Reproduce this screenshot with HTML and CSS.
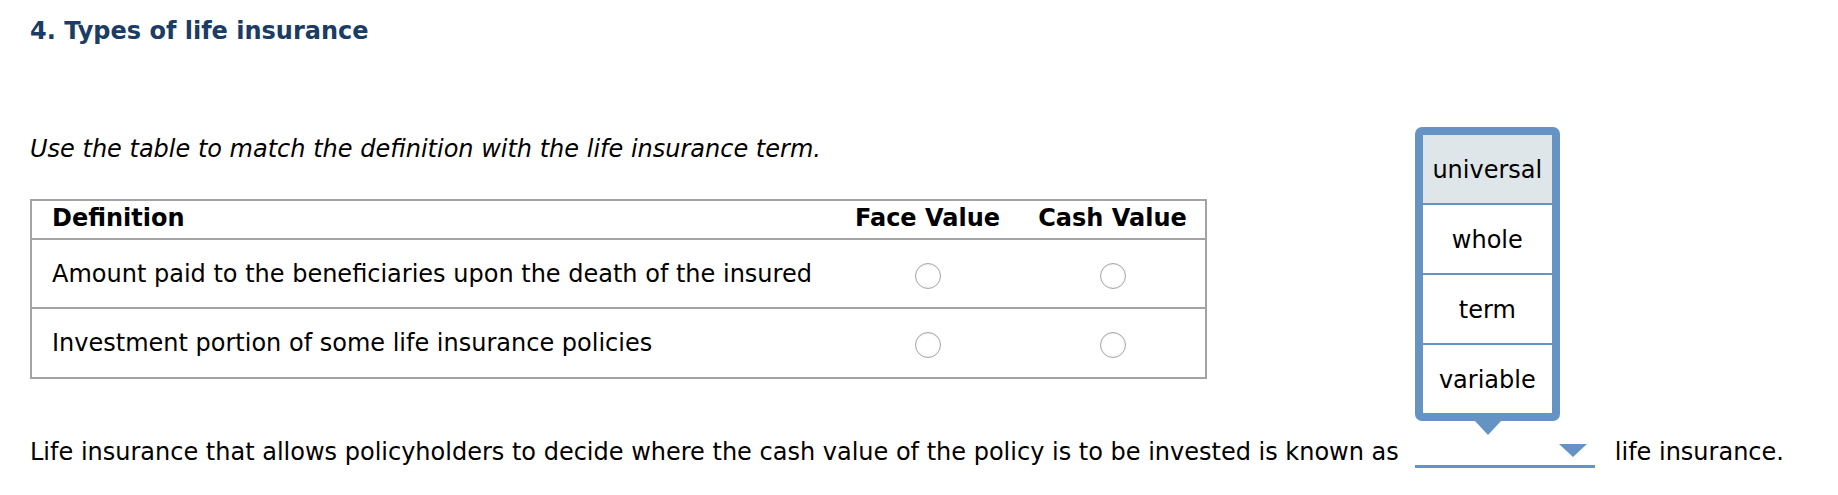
FILE: index.html
```html
<!DOCTYPE html>
<html lang="en">
<head>
<meta charset="utf-8">
<title>Types of life insurance</title>
<link rel="stylesheet" href="styles.css">
</head>
<body>
<h1 class="title">4. Types of life insurance</h1>
<p class="instructions">Use the table to match the definition with the life insurance term.</p>
<table class="match">
  <colgroup>
    <col class="col-def">
    <col class="col-face">
    <col class="col-cash">
  </colgroup>
  <thead>
    <tr>
      <th class="th-def">Definition</th>
      <th class="th-opt">Face Value</th>
      <th class="th-opt">Cash Value</th>
    </tr>
  </thead>
  <tbody>
    <tr>
      <td class="td-def">Amount paid to the beneficiaries upon the death of the insured</td>
      <td class="td-opt"><span class="radio"></span></td>
      <td class="td-opt"><span class="radio"></span></td>
    </tr>
    <tr>
      <td class="td-def">Investment portion of some life insurance policies</td>
      <td class="td-opt"><span class="radio"></span></td>
      <td class="td-opt"><span class="radio"></span></td>
    </tr>
  </tbody>
</table>
<div class="sentence">
  <span class="text">Life insurance that allows policyholders to decide where the cash value of the policy is to be invested is known as</span>
  <span class="select">
    <span class="popup">
      <span class="option active">universal</span>
      <span class="option">whole</span>
      <span class="option">term</span>
      <span class="option">variable</span>
    </span>
    <span class="pointer"></span>
    <span class="arrow"></span>
  </span>
  <span class="text">life insurance.</span>
</div>
</body>
</html>
```

FILE: styles.css
```css
html, body {
  margin: 0;
  padding: 0;
  background: #ffffff;
}

body {
  padding: 0 30px;
  font-family: "DejaVu Sans", Verdana, sans-serif;
  font-size: 24px;
  color: #000000;
}

.title {
  margin: 0;
  padding-top: 17px;
  font-size: 24px;
  line-height: 28px;
  font-weight: bold;
  color: #1b3c64;
}

.instructions {
  margin: 90px 0 0 0;
  font-style: italic;
  line-height: 28px;
}

.match {
  margin-top: 36px;
  width: 1177px;
  border-collapse: collapse;
  border: 2px solid #a3a3a3;
  table-layout: fixed;
}

.col-face { width: 185px; }
.col-cash { width: 186px; }

.match th,
.match td {
  padding: 0;
  border-bottom: 2px solid #a3a3a3;
  vertical-align: middle;
  line-height: 28px;
}

.match th {
  height: 34px;
  padding-bottom: 3px;
  font-weight: bold;
}

.match .th-def,
.match .td-def {
  text-align: left;
  padding-left: 20px;
}

.match .th-opt,
.match .td-opt {
  text-align: center;
}

.match tbody tr:first-child td { height: 67px; }
.match tbody tr:last-child td { height: 68px; }

.radio {
  display: inline-block;
  width: 26px;
  height: 26px;
  box-sizing: border-box;
  border-radius: 50%;
  border: 1px solid #a6a6a6;
  background: radial-gradient(circle at 50% 40%, #ffffff 55%, #ededed 100%);
  box-shadow: inset 0 1px 1px rgba(0, 0, 0, 0.08);
  vertical-align: middle;
  position: relative;
  top: 1px;
}

.sentence {
  margin-top: 57px;
  display: flex;
  align-items: flex-start;
  line-height: 32px;
  white-space: nowrap;
}

.select {
  position: relative;
  display: block;
  width: 180px;
  height: 32px;
  box-sizing: border-box;
  border-bottom: 3px solid #6594c4;
  margin: 0 20px 0 16px;
}

.popup {
  position: absolute;
  left: 0;
  bottom: calc(100% + 15px);
  width: 145px;
  box-sizing: border-box;
  border: 8px solid #6594c4;
  border-radius: 7px;
  background: #6594c4;
  display: flex;
  flex-direction: column;
  gap: 2px;
}

.option {
  display: block;
  height: 68px;
  box-sizing: border-box;
  padding-top: 2px;
  line-height: 66px;
  text-align: center;
  background: #ffffff;
  font-size: 24px;
}

.option.active {
  background: #dfe6e9;
}

.pointer {
  position: absolute;
  left: 59px;
  top: -16px;
  width: 0;
  height: 0;
  border-left: 14px solid transparent;
  border-right: 14px solid transparent;
  border-top: 15px solid #6594c4;
}

.arrow {
  position: absolute;
  right: 8px;
  top: 8px;
  width: 0;
  height: 0;
  border-left: 14px solid transparent;
  border-right: 14px solid transparent;
  border-top: 13px solid #6594c4;
}
```
